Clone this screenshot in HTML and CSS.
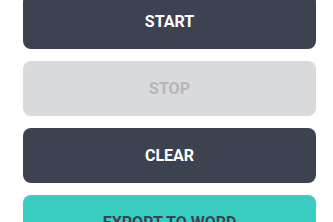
FILE: index.html
```html
<!DOCTYPE html>
<html lang="en">
<head>
    <meta charset="UTF-8">
    <meta name="viewport" content="width=device-width, initial-scale=1.0">
    <title>controls</title>
    <link rel="stylesheet" href="styles.css">
</head>
<body>
    <section class="controls">
        <button class="btn btn-dark">START</button>
        <button class="btn btn-disabled" disabled>STOP</button>
        <button class="btn btn-dark">CLEAR</button>
        <button class="btn btn-teal">EXPORT TO WORD</button>
    </section>
</body>
</html>
```
FILE: styles.css
```css
body {
    margin: 0;
    background: #ffffff;
    font-family: Roboto, "Liberation Sans", sans-serif;
    overflow: hidden;
}
.controls {
    display: flex;
    flex-direction: column;
    gap: 12px;
    padding: 0 17px 0 23px;
    margin-top: -6px;
}
.btn {
    height: 55px;
    border: none;
    border-radius: 8px;
    font-family: inherit;
    font-size: 16px;
    font-weight: 700;
    text-align: center;
    padding: 0;
}
.btn-dark {
    background-color: #3d4250;
    color: #ffffff;
}
.btn-disabled {
    background-color: #d9dadc;
    color: #b4b6ba;
}
.btn-teal {
    background-color: #38cdc0;
    color: #3d4250;
}
```
